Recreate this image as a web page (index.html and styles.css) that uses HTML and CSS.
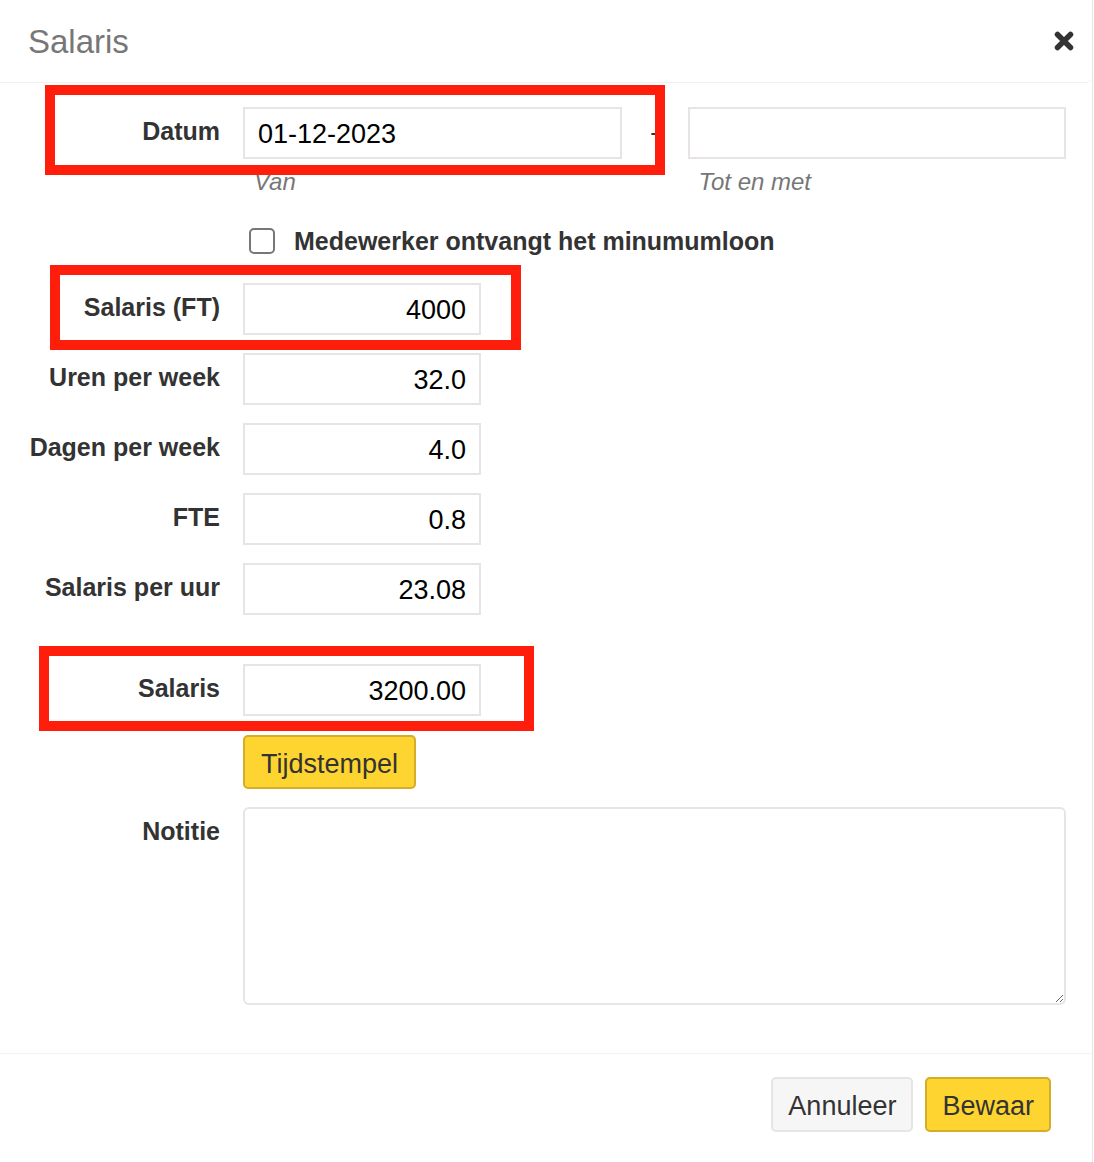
FILE: index.html
```html
<!DOCTYPE html>
<html lang="nl">
<head>
  <meta charset="UTF-8">
  <meta name="viewport" content="width=device-width, initial-scale=1.0">
  <title>Salaris</title>
  <link rel="stylesheet" href="styles.css">
</head>
<body>

  <div class="modal">
    <div class="modal-header">
      <h2 class="modal-title">Salaris</h2>
      <button class="close" type="button" aria-label="Sluiten">
        <svg width="20" height="20" viewBox="0 0 20 20">
          <path d="M3.5 3.5 L16.5 16.5 M16.5 3.5 L3.5 16.5" stroke="#333" stroke-width="5.5" stroke-linecap="round"/>
        </svg>
      </button>
    </div>

    <form class="modal-body">
      <div class="form-row row-datum">
        <label class="control-label">Datum</label>
        <div class="date-range">
          <div>
            <input class="form-control" type="text" value="01-12-2023">
            <span class="help-block">Van</span>
          </div>
          <span class="sep">-</span>
          <div>
            <input class="form-control" type="text" value="">
            <span class="help-block">Tot en met</span>
          </div>
        </div>
      </div>

      <div class="form-row row-check">
        <span></span>
        <label class="checkbox"><span class="box"></span>Medewerker ontvangt het minumumloon</label>
      </div>

      <div class="form-row">
        <label class="control-label">Salaris (FT)</label>
        <input class="form-control num" type="text" value="4000">
      </div>
      <div class="form-row">
        <label class="control-label">Uren per week</label>
        <input class="form-control num" type="text" value="32.0">
      </div>
      <div class="form-row">
        <label class="control-label">Dagen per week</label>
        <input class="form-control num" type="text" value="4.0">
      </div>
      <div class="form-row">
        <label class="control-label">FTE</label>
        <input class="form-control num" type="text" value="0.8">
      </div>
      <div class="form-row row-spaced">
        <label class="control-label">Salaris per uur</label>
        <input class="form-control num" type="text" value="23.08">
      </div>
      <div class="form-row row-salaris">
        <label class="control-label">Salaris</label>
        <input class="form-control num" type="text" value="3200.00">
      </div>
      <div class="form-row">
        <span></span>
        <div><button class="btn btn-warning" type="button">Tijdstempel</button></div>
      </div>
      <div class="form-row last">
        <label class="control-label">Notitie</label>
        <textarea class="form-control notes"></textarea>
      </div>
    </form>

    <div class="modal-footer">
      <button class="btn btn-default" type="button">Annuleer</button>
      <button class="btn btn-warning" type="button">Bewaar</button>
    </div>

    <!-- annotation boxes -->
    <div class="mark mark-datum"></div>
    <div class="mark mark-ft"></div>
    <div class="mark mark-salaris"></div>
  </div>

</body>
</html>
```

FILE: styles.css
```css
body {
  margin: 0;
  background: #fff;
  font-family: "Liberation Sans", Arial, sans-serif;
  color: #333;
}
.modal {
  position: relative;
  width: 1093px;
  min-height: 1162px;
  border-right: 1px solid #e6e6e6;
  box-sizing: border-box;
}
.modal-header {
  height: 82px;
  border-bottom: 1px solid #f0f0f0;
  border-bottom-right-radius: 6px;
  display: flex;
  align-items: center;
  justify-content: space-between;
  padding: 0 18px 0 28px;
}
.modal-title {
  margin: 0;
  font-size: 33px;
  font-weight: normal;
  color: #777;
  line-height: 1;
}
.close {
  border: none;
  background: none;
  padding: 0;
  width: 20px;
  height: 20px;
  cursor: pointer;
}
.modal-body {
  padding: 24px 26px 48px 0;
}
.form-row {
  display: grid;
  grid-template-columns: 220px 1fr;
  column-gap: 23px;
  align-items: start;
  margin-bottom: 18px;
}
.form-row.last {
  margin-bottom: 0;
}
.row-datum {
  margin-bottom: 24px;
}
.row-check {
  margin-bottom: 24px;
}
.row-spaced {
  margin-bottom: 49px;
}
.row-salaris {
  margin-bottom: 19px;
}
.control-label {
  text-align: right;
  font-size: 25px;
  font-weight: bold;
  line-height: 36px;
  padding-top: 6px;
  color: #333;
}
.form-control {
  display: block;
  box-sizing: border-box;
  height: 52px;
  width: 100%;
  border: 2px solid #e8e4e5;
  border-radius: 0;
  padding: 2px 13px 0;
  font-family: "Liberation Sans", Arial, sans-serif;
  font-size: 27px;
  color: #000;
  background: #fff;
  outline: none;
}
.form-control.num {
  width: 238px;
  text-align: right;
}
.form-control.notes {
  height: 198px;
  border-radius: 6px;
  resize: vertical;
}
.date-range {
  display: grid;
  grid-template-columns: 1fr 66px 1fr;
}
.sep {
  text-align: center;
  font-size: 25px;
  line-height: 50px;
  color: #333;
}
.help-block {
  display: block;
  margin-top: 6px;
  padding-left: 11px;
  font-size: 24px;
  font-style: italic;
  line-height: 34px;
  color: #777;
}
.checkbox {
  display: flex;
  align-items: center;
  height: 36px;
  font-size: 25px;
  font-weight: bold;
  color: #333;
}
.checkbox .box {
  width: 26px;
  height: 26px;
  box-sizing: border-box;
  border: 2px solid #777;
  border-radius: 5px;
  margin: 0 19px 0 6px;
}
.btn {
  box-sizing: border-box;
  height: 55px;
  padding: 4px 16px 0;
  border-radius: 5px;
  font-family: "Liberation Sans", Arial, sans-serif;
  font-size: 27px;
  color: #333;
  cursor: pointer;
}
.btn-warning {
  background-color: #fed530;
  border: 2px solid #d6ad28;
}
.btn-default {
  background-color: #f7f6f7;
  border: 2px solid #e7e4e6;
}
.modal-footer .btn {
  padding: 4px 15px 0;
}
.form-row .btn {
  height: 54px;
}
.modal-footer {
  border-top: 1px solid #f3f3f3;
  padding: 23px 41px 0 0;
  display: flex;
  justify-content: flex-end;
  gap: 12px;
}
.mark {
  position: absolute;
  box-sizing: border-box;
  border: 10px solid #ff1e0b;
}
.mark-datum {
  left: 45px;
  top: 85px;
  width: 620px;
  height: 90px;
}
.mark-ft {
  left: 50px;
  top: 265px;
  width: 471px;
  height: 85px;
}
.mark-salaris {
  left: 39px;
  top: 646px;
  width: 495px;
  height: 85px;
}
```
